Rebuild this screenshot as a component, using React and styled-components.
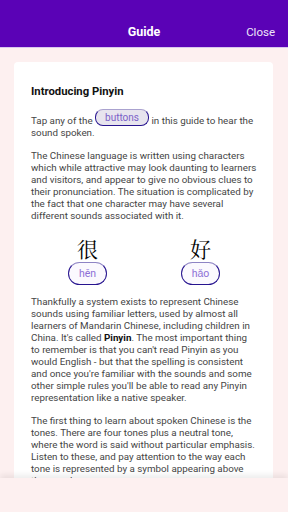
import styled, { createGlobalStyle } from "styled-components";

const Global = createGlobalStyle`
  *, *::before, *::after {
    box-sizing: border-box;
  }
  html, body {
    margin: 0;
    padding: 0;
    background: #fdf0f0;
  }
  body {
    font-family: Roboto, "Noto Sans", sans-serif;
  }
`;

const Screen = styled.div`
  width: 288px;
  height: 512px;
  display: flex;
  flex-direction: column;
  overflow: hidden;
`;

const Header = styled.header`
  height: 48px;
  flex-shrink: 0;
  background: #5a02b6;
  border-bottom: 1px solid #d8c6ee;
  display: grid;
  grid-template-columns: 1fr auto 1fr;
  align-items: center;
  padding: 16px 13px 0;
  color: #fff;
`;

const Title = styled.h1`
  grid-column: 2;
  margin: 0;
  font-size: 12.5px;
  font-weight: 700;
`;

const Close = styled.span`
  justify-self: end;
  font-size: 11.5px;
  color: #eee6fa;
`;

const Scroller = styled.main`
  flex: 1;
  overflow: hidden;
  padding: 14px 15px 0 14px;
`;

const Card = styled.section`
  background: #fff;
  border-radius: 4px;
  padding: 24px 16px 20px 17px;
  color: #454545;
  font-size: 9.8px;
  line-height: 12px;
`;

const Heading = styled.h2`
  margin: 0 0 11px;
  font-size: 11.3px;
  line-height: 12px;
  font-weight: 700;
  color: #111;
`;

const Para = styled.p`
  margin: 0 0 11px;
  b { color: #111; }
`;

const InlineButton = styled.span`
  display: inline-block;
  vertical-align: 3px;
  width: 54px;
  height: 17px;
  line-height: 15px;
  text-align: center;
  border-radius: 8px;
  border: 1px solid #27148f;
  border-top-color: #aaa2cf;
  background: #e7e4ee;
  color: #7a60c8;
  font-size: 10px;
`;

const CharRow = styled.div`
  display: flex;
  gap: 74px;
  padding-left: 37px;
  margin: 14px 0 11px;
`;

const CharCell = styled.div`
  width: 39px;
  display: flex;
  flex-direction: column;
  align-items: center;
  gap: 2px;
`;

const Hanzi = styled.div`
  font-family: "AR PL UKai CN", "AR PL UMing CN", "Noto Serif CJK SC", "Noto Sans CJK SC", serif;
  font-size: 21px;
  line-height: 24px;
  color: #000;
`;

const PinyinButton = styled.button`
  width: 39px;
  height: 23px;
  border-radius: 12px;
  border: 1px solid #27148f;
  border-top-color: #8e84c4;
  background: #fbf9fe;
  color: #8d6fd6;
  font-family: Roboto, sans-serif;
  font-size: 10.5px;
  padding: 0;
`;

const Footer = styled.footer`
  height: 34px;
  flex-shrink: 0;
  background: #fdf0f0;
  box-shadow: 0 -3px 6px rgba(0, 0, 0, 0.08);
  position: relative;
`;

const chars = [
  { hanzi: "很", pinyin: "hěn" },
  { hanzi: "好", pinyin: "hǎo" },
];

export default function App() {
  return (
    <Screen>
      <Global />
      <Header>
        <Title>Guide</Title>
        <Close>Close</Close>
      </Header>
      <Scroller>
        <Card>
          <Heading>Introducing Pinyin</Heading>
          <Para>
            Tap any of the <InlineButton>buttons</InlineButton> in this guide to hear the sound spoken.
          </Para>
          <Para>
            The Chinese language is written using characters which while attractive may look daunting to
            learners and visitors, and appear to give no obvious clues to their pronunciation. The situation
            is complicated by the fact that one character may have several different sounds associated with it.
          </Para>
          <CharRow>
            {chars.map((c) => (
              <CharCell key={c.hanzi}>
                <Hanzi>{c.hanzi}</Hanzi>
                <PinyinButton>{c.pinyin}</PinyinButton>
              </CharCell>
            ))}
          </CharRow>
          <Para>
            Thankfully a system exists to represent Chinese sounds using familiar letters, used by almost all
            learners of Mandarin Chinese, including children in China. It's called <b>Pinyin</b>. The most
            important thing to remember is that you can't read Pinyin as you would English - but that the
            spelling is consistent and once you're familiar with the sounds and some other simple rules
            you'll be able to read any Pinyin representation like a native speaker.
          </Para>
          <Para>
            The first thing to learn about spoken Chinese is the tones. There are four tones plus a neutral
            tone, where the word is said without particular emphasis. Listen to these, and pay attention to
            the way each tone is represented by a symbol appearing above the vowel.
          </Para>
        </Card>
      </Scroller>
      <Footer />
    </Screen>
  );
}
